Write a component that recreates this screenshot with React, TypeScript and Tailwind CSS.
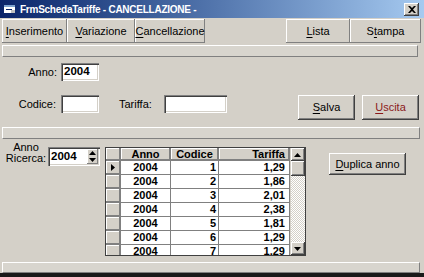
import React from 'react';

const raised =
  'shadow-[inset_-1px_-1px_0_#404040,inset_1px_1px_0_#ffffff,inset_-2px_-2px_0_#808080,inset_2px_2px_0_#d4d0c8]';
const flatRaised = 'shadow-[inset_-1px_-1px_0_#808080,inset_1px_1px_0_#ffffff]';
const sunken =
  'shadow-[inset_1px_1px_0_#808080,inset_2px_2px_0_#404040,inset_-1px_-1px_0_#ffffff,inset_-2px_-2px_0_#d4d0c8]';
const panel = 'border-t border-l border-white border-b border-r border-b-[#808080] border-r-[#808080] bg-[#d8d5ce]';

const rows = [
  { anno: '2004', codice: '1', tariffa: '1,29' },
  { anno: '2004', codice: '2', tariffa: '1,86' },
  { anno: '2004', codice: '3', tariffa: '2,01' },
  { anno: '2004', codice: '4', tariffa: '2,38' },
  { anno: '2004', codice: '5', tariffa: '1,81' },
  { anno: '2004', codice: '6', tariffa: '1,29' },
  { anno: '2004', codice: '7', tariffa: '1,29' },
];

function ToolButton({ first, rest, pre = '', width }: { first: string; rest: string; pre?: string; width: string }) {
  return (
    <div className={`${width} h-[24px] flex items-center justify-center ${flatRaised}`}>
      <span>
        {pre}
        <span className="underline underline-offset-2">{first}</span>
        {rest}
      </span>
    </div>
  );
}

function Triangle({ dir }: { dir: 'up' | 'down' | 'right' }) {
  if (dir === 'up')
    return (
      <svg width="7" height="4" viewBox="0 0 7 4">
        <polygon points="3.5,0 7,4 0,4" fill="#000" />
      </svg>
    );
  if (dir === 'down')
    return (
      <svg width="7" height="4" viewBox="0 0 7 4">
        <polygon points="0,0 7,0 3.5,4" fill="#000" />
      </svg>
    );
  return (
    <svg width="4" height="7" viewBox="0 0 4 7">
      <polygon points="0,0 4,3.5 0,7" fill="#000" />
    </svg>
  );
}

export default function App() {
  return (
    <div className="w-[424px] h-[277px] bg-[#d4d0c8] flex flex-col overflow-hidden font-['Liberation_Sans',Arial,sans-serif] text-[11px] text-black border-b-[4px] border-b-[#1a1a1a]">
      {/* Title bar */}
      <div className="h-[18px] shrink-0 flex items-center bg-gradient-to-r from-[#0a246a] to-[#a6caf0] pl-[4px] pr-[5px]">
        <svg width="12" height="10" viewBox="0 0 12 10" className="mr-[4px]">
          <rect x="0" y="1" width="11" height="8" fill="#ffffff" />
          <rect x="0" y="1" width="11" height="2" fill="#7da2ce" />
          <rect x="2" y="5" width="6" height="1" fill="#0a246a" />
          <rect x="7" y="6" width="4" height="3" fill="#c0c0c0" />
        </svg>
        <span className="text-white font-bold text-[10px] tracking-[-0.25px]">FrmSchedaTariffe - CANCELLAZIONE -</span>
        <div className="flex-1" />
        <div className={`w-[15px] h-[13px] bg-[#d4d0c8] flex items-center justify-center ${raised}`}>
          <svg width="8" height="7" viewBox="0 0 8 7">
            <path d="M0 0 L2 0 L4 2 L6 0 L8 0 L5 3.5 L8 7 L6 7 L4 5 L2 7 L0 7 L3 3.5 Z" fill="#000" />
          </svg>
        </div>
      </div>

      {/* Toolbar */}
      <div className="h-[27px] shrink-0 flex pt-[1px] pl-[2px] pr-[3px]">
        <ToolButton width="w-[65px]" first="I" rest="nserimento" />
        <ToolButton width="w-[68px]" first="V" rest="ariazione" />
        <ToolButton width="w-[70px]" first="C" rest="ancellazione" />
        <div className="flex-1" />
        <ToolButton width="w-[64px]" first="L" rest="ista" />
        <ToolButton width="w-[71px]" pre="S" first="t" rest="ampa" />
      </div>

      {/* Bar */}
      <div className={`h-[12px] shrink-0 ml-[2px] mr-[6px] ${panel}`} />

      {/* Form */}
      <div className="h-[70px] shrink-0 flex flex-col pt-[6px]">
        <div className="flex items-center h-[18px]">
          <div className="w-[57px] text-right">Anno:</div>
          <div className={`ml-[4px] w-[38px] h-[18px] bg-white ${sunken} flex items-center pl-[3px] font-bold text-[11.5px]`}>
            2004
          </div>
        </div>
        <div className="flex items-start mt-[14px] pr-[5px]">
          <div className="w-[56px] h-[18px] flex items-center justify-end">Codice:</div>
          <div className={`ml-[5px] w-[38px] h-[18px] bg-white ${sunken}`} />
          <div className="ml-[20px] w-[45px] h-[18px] flex items-center">Tariffa:</div>
          <div className={`w-[63px] h-[18px] bg-white ${sunken}`} />
          <div className="flex-1" />
          <div className={`w-[57px] h-[25px] flex items-center justify-center ${raised}`}>
            <span>
              <span className="underline underline-offset-2">S</span>alva
            </span>
          </div>
          <div className={`ml-[7px] w-[57px] h-[25px] flex items-center justify-center text-[#8b1a1a] ${raised}`}>
            <span>
              <span className="underline underline-offset-2">U</span>scita
            </span>
          </div>
        </div>
      </div>

      {/* Bar */}
      <div className={`h-[12px] shrink-0 ml-[2px] mr-[4px] ${panel}`} />

      {/* Grid section */}
      <div className="h-[123px] shrink-0 flex items-start pt-[8px]">
        <div className="ml-[6px] w-[40px] -mt-[5px] flex flex-col items-center leading-[11px]">
          <span>Anno</span>
          <span>Ricerca:</span>
        </div>
        <div className={`ml-[2px] w-[52px] h-[19px] bg-white ${sunken} flex items-center pl-[3px] pr-[2px]`}>
          <span className="font-bold text-[11.5px] flex-1">2004</span>
          <div className={`w-[11px] h-[15px] bg-[#d4d0c8] flex flex-col items-center justify-center gap-[3px] ${flatRaised}`}>
            <Triangle dir="up" />
            <Triangle dir="down" />
          </div>
        </div>

        {/* Data grid */}
        <div className="ml-[5px] w-[201px] h-[109px] border border-[#404040] bg-[#d4d0c8] flex overflow-hidden">
          <div className="w-[183px] flex flex-col font-bold">
            <div className="h-[13px] shrink-0 grid grid-cols-[15px_50px_48px_70px]">
              <div className={`${flatRaised} border-r border-b border-[#808080]`} />
              <div className={`${flatRaised} border-r border-b border-[#808080] flex items-center justify-center leading-none`}>Anno</div>
              <div className={`${flatRaised} border-r border-b border-[#808080] flex items-center justify-center leading-none`}>Codice</div>
              <div className={`${flatRaised} border-b border-[#808080] flex items-center justify-end pr-[4px] leading-none`}>Tariffa</div>
            </div>
            {rows.map((r, i) => (
              <div key={i} className="h-[14px] shrink-0 grid grid-cols-[15px_50px_48px_70px]">
                <div className={`${flatRaised} border-r border-b border-[#808080] flex items-center justify-center`}>
                  {i === 0 && <Triangle dir="right" />}
                </div>
                <div className="bg-white border-r border-b border-[#808080] flex items-center justify-center leading-none">
                  {r.anno}
                </div>
                <div className="bg-white border-r border-b border-[#808080] flex items-center justify-end pr-[2px] leading-none">
                  {r.codice}
                </div>
                <div className="bg-white border-b border-[#808080] flex items-center justify-end pr-[4px] leading-none">
                  {r.tariffa}
                </div>
              </div>
            ))}
          </div>
          <div className="w-[1px] bg-[#808080]" />
          {/* Scrollbar */}
          <div className="w-[16px] ml-[1px] flex flex-col">
            <div className={`h-[13px] shrink-0 bg-[#d4d0c8] flex items-center justify-center ${raised}`}>
              <Triangle dir="up" />
            </div>
            <div className={`h-[15px] shrink-0 bg-[#d4d0c8] ${raised}`} />
            <div className="flex-1 bg-[repeating-conic-gradient(#d4d0c8_0_25%,#ffffff_0_50%)] bg-[length:2px_2px]" />
            <div className={`h-[13px] shrink-0 bg-[#d4d0c8] flex items-center justify-center ${raised}`}>
              <Triangle dir="down" />
            </div>
          </div>
        </div>

        <div className={`ml-[23px] mt-[6px] w-[77px] h-[22px] flex items-center justify-center ${raised}`}>
          <span>
            <span className="underline underline-offset-2">D</span>uplica anno
          </span>
        </div>
      </div>

      {/* Bottom bar */}
      <div className={`h-[11px] shrink-0 ml-[2px] mr-[4px] ${panel}`} />
    </div>
  );
}
